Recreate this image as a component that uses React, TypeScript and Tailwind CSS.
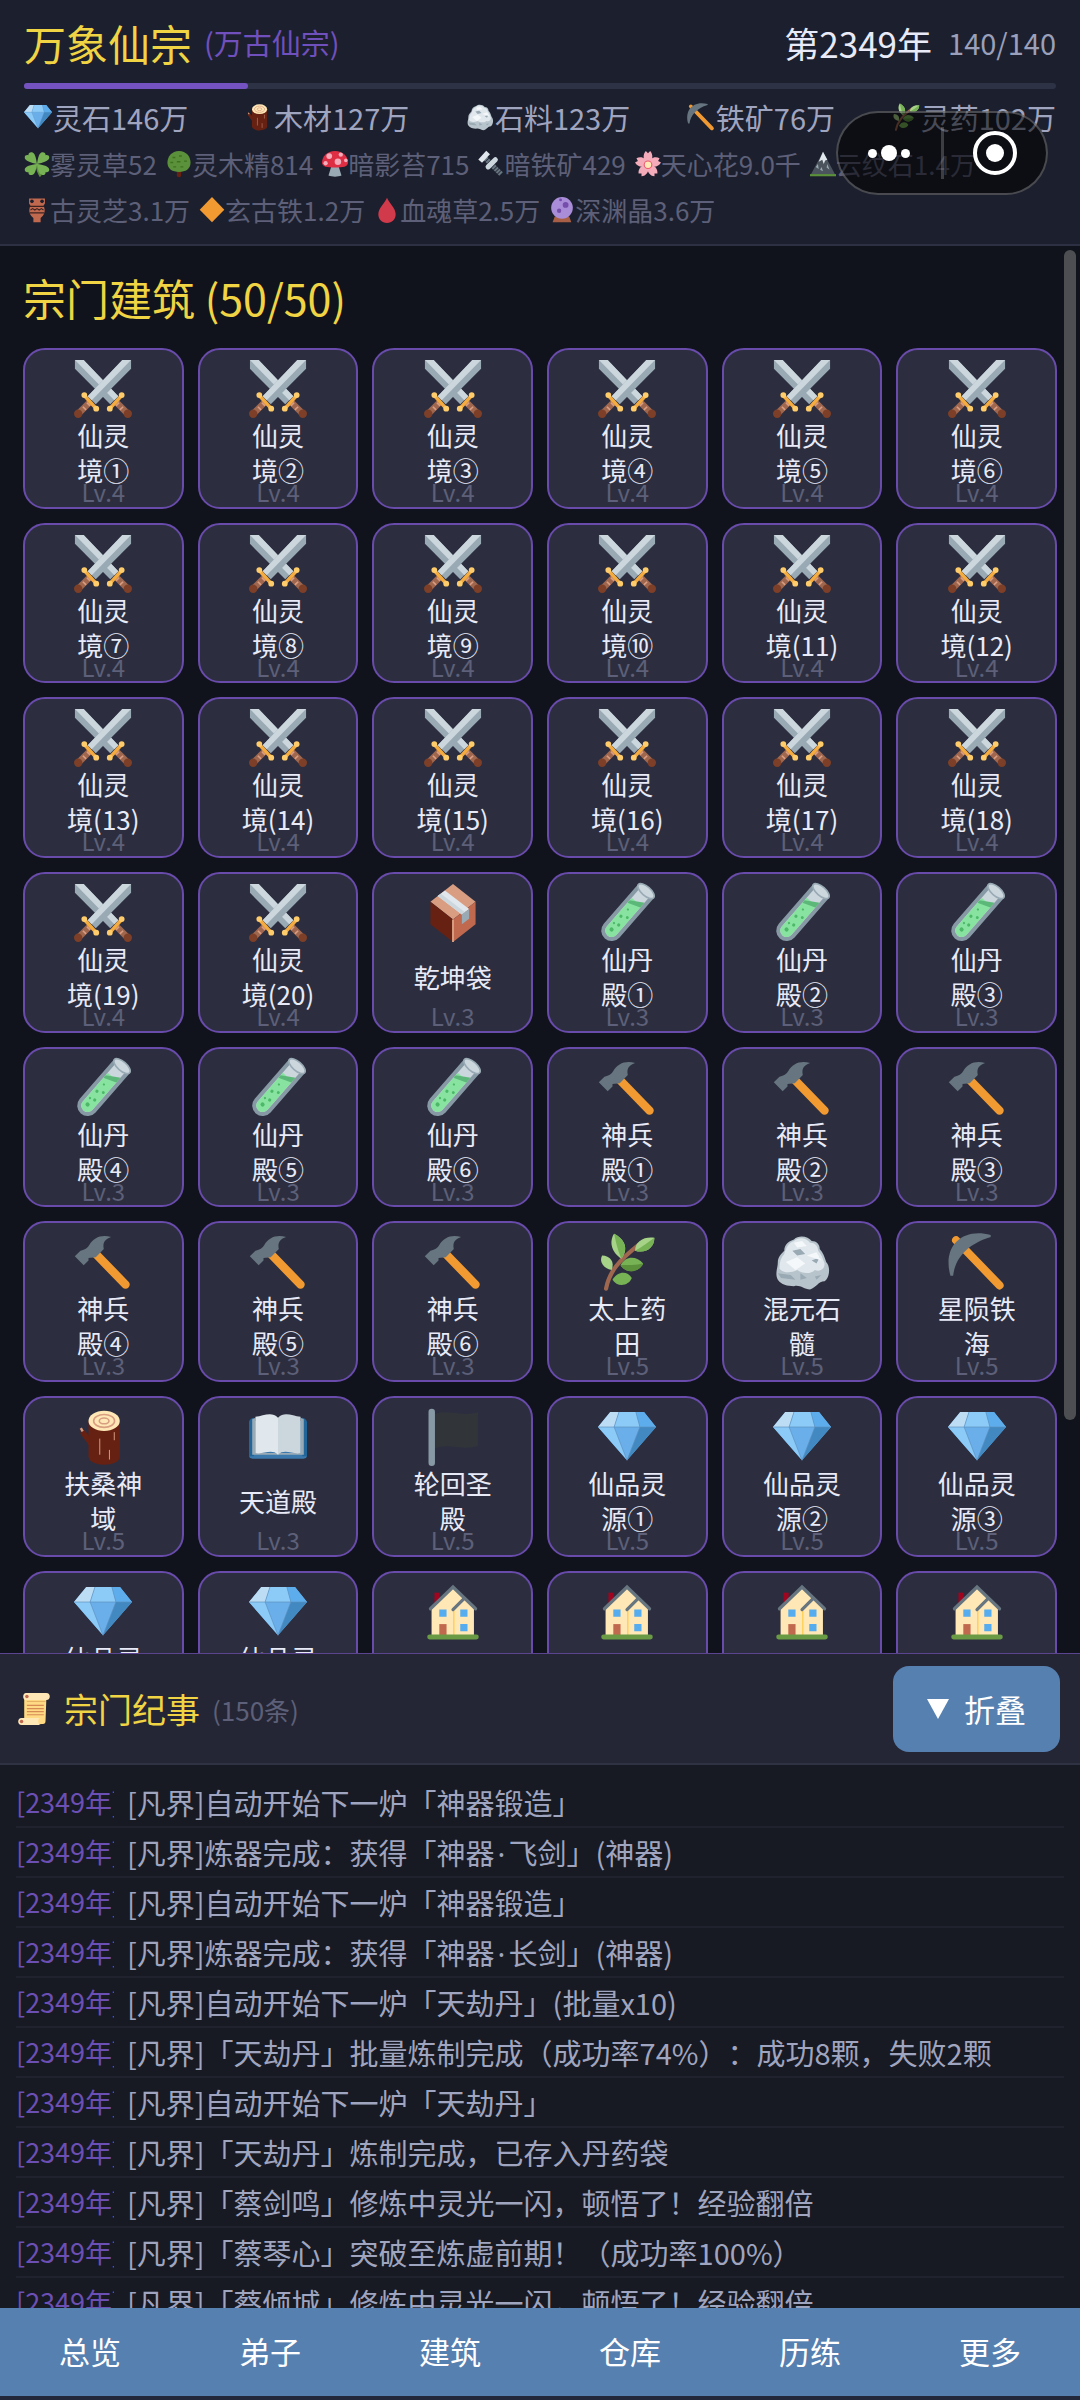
import type { ReactNode } from "react";

type IconName =
  | "swords" | "box" | "tube" | "hammer" | "herb" | "rock" | "pickaxe" | "log" | "book" | "flag" | "gem" | "house"
  | "clover" | "tree" | "mushroom" | "bolt" | "blossom" | "mountain" | "amphora" | "diamond" | "drop" | "orb" | "scroll";

const sword = (
  <>
    <path d="M30 0h5.400v5.500L13.500 27.500l-5-5z" fill="#99aab5" />
    <path d="M30 0h5.400L11 25l-2.500-2.500z" fill="#ccd6dd" />
    <path d="M10.500 25.500L3.500 32.500" stroke="#a0674f" strokeWidth="4" />
    <path d="M8 26.500l2 2M5.500 29l2 2" stroke="#d99e82" strokeWidth="1" />
    <circle cx="2.600" cy="33.400" r="2.600" fill="#7d3f27" />
    <path d="M6.400 22l7.400 8.200" stroke="#f4ab3f" strokeWidth="2.200" />
    <circle cx="6.400" cy="21.800" r="1.800" fill="#ffcc6b" />
    <circle cx="13.800" cy="30.200" r="1.800" fill="#ffcc6b" />
  </>
);

const ICONS: Record<IconName, ReactNode> = {
  swords: (
    <>
      <g transform="translate(36 0) scale(-1 1)">{sword}</g>
      {sword}
    </>
  ),
  box: (
    <>
      <path d="M18 0L32 11 18 22 4 11z" fill="#d99e82" />
      <path d="M4 11l14 11v14L4 25z" fill="#662113" />
      <path d="M32 11L18 22v14l14-11z" fill="#c1694f" />
      <path d="M18 22v14" stroke="#d99e82" strokeWidth="1.200" />
      <path d="M8.500 7.500L13 4l15 11.500-4.500 3.500z" fill="#e1e8ed" />
      <path d="M8.500 7.500l2-1.500 15 11.500-2 1.500z" fill="#ccd6dd" />
      <path d="M23.500 19l4.500-3.500v6L23.500 25z" fill="#99aab5" />
    </>
  ),
  tube: (
    <g transform="rotate(41 18 18)">
      <path d="M11.500 0h13v32.500a6.500 6.500 0 0 1-13 0z" fill="#8899a6" />
      <path d="M14 2h8v30.500a4 4 0 0 1-8 0z" fill="#ccd6dd" />
      <path d="M14 9h8v23.500a4 4 0 0 1-8 0z" fill="#88e3a0" />
      <path d="M14 11l8-5v4l-8 3z" fill="#5cb878" />
      <ellipse cx="18" cy="0" rx="6.300" ry="2.800" fill="#ccd6dd" stroke="#99aab5" />
      <g fill="#4cb868">
        <circle cx="17.500" cy="32" r="1.300" />
        <circle cx="19" cy="27" r="1" />
        <circle cx="16" cy="28" r=".7" />
        <circle cx="16.500" cy="22" r="1" />
        <circle cx="20" cy="20" r=".9" />
        <circle cx="17" cy="16" r=".7" />
      </g>
    </g>
  ),
  hammer: (
    <>
      <path d="M13.500 13L32 32" stroke="#f19a32" strokeWidth="5.200" strokeLinecap="round" />
      <path d="M23 2.500C17 .8 12 3 9.500 7.500 8 9.500 7 10.500 4 11l-3.500 3.500L6 20l3-3v-1.500l4.500-.5 5-5c-.8-4 .5-6 4.500-7.500z" fill="#66757f" />
    </>
  ),
  pickaxe: (
    <>
      <path d="M5 4.500L32 32.500" stroke="#f19a32" strokeWidth="5" strokeLinecap="round" />
      <path d="M26.500 1.200C8-3.500-3.500 9 1.500 26.500h1.700C4.500 15 13 6.500 26.500 2.500z" fill="#66757f" />
    </>
  ),
  herb: (
    <>
      <path d="M5 34.500C7 24 13 17 25 7.500" stroke="#a0674f" strokeWidth="2.600" fill="none" strokeLinecap="round" />
      <path d="M14.500 16C7 11 7.500 4 10 .500c6 3 9.500 9 4.500 15.500z" fill="#a6d388" />
      <path d="M14.500 16C12 10 11 5 10 .500c6 3 9.500 9 4.500 15.500z" fill="#77b255" />
      <path d="M23 11c0-6 6-9 12-8 0 6-5 10-12 8z" fill="#a6d388" />
      <path d="M23 11c4-2 8-5 12-8 0 6-5 10-12 8z" fill="#77b255" />
      <path d="M8.500 23c-5-1-8-5-6-9 5 0 8 4 6 9z" fill="#a6d388" />
      <path d="M14 20c3-6 10-6 14-1-2 5-10 7-14 1z" fill="#77b255" />
      <path d="M14 20c4 0 10 0 14-1-2 5-10 7-14 1z" fill="#5c913b" />
      <path d="M9 29c3-5 9-6 12-1-2 5-9 6-12 1z" fill="#77b255" />
    </>
  ),
  rock: (
    <>
      <path d="M13 4c3-3 9-2 11 1 3 0 5 2 5 5 2 2 3 5 4 8 3 3 2 10-1 12-4 0-5 4-9 5-4 0-6-3-10-2-4 0-8-1-10-4-2-4 0-7 0-11 0-3 2-5 4-7 0-4 3-6 6-7z" fill="#b8c4cc" />
      <path d="M13 5c3-3 8-2 10 1 3 0 5 2 5 5 2 2 3 5 4 8 0 4-3 5-6 4-3 3-8 2-11 0-4 2-9 2-11-1 0-4 1-7 3-9 1-4 3-7 6-8z" fill="#e1e8ed" />
      <path d="M12 11l5-1 3 3-5 1zM24 17l5-2-2 4zM3 25l8 1 3 3-9-1zM17 25l4 3-4 1zM26 27l4-1-3 3z" fill="#99aab5" />
      <path d="M13 6l5-1 3 3-6 1zM8 18l7-3 5 4-6 4zM21 14l6-2 3 5z" fill="#f5f8fa" />
    </>
  ),
  gem: (
    <>
      <path d="M7.600 2.500h21L36 11.800 18 32.500 0 11.800z" fill="#6aaeea" />
      <path d="M7.600 2.500H13L10 11.800H0z" fill="#bdddf4" />
      <path d="M13 2.500h10.500l2.500 9.300H10z" fill="#8ccaf7" />
      <path d="M23.500 2.500h5L36 11.800H26z" fill="#5dadec" />
      <path d="M0 11.800h10l8 20.700z" fill="#8ccaf7" />
      <path d="M36 11.800H26l-8 20.700z" fill="#4289c1" />
      <path d="M0 11.800h36M13 2.500l-3 9.300 8 20.700 8-20.700-2.500-9.300" stroke="#5b8fbd" strokeWidth=".4" fill="none" />
    </>
  ),
  log: (
    <>
      <path d="M9 8v22c0 7 19.500 7 19.500 0V8z" fill="#662113" />
      <path d="M10 24L4 16l.5-4 5 5z" fill="#662113" />
      <path d="M4.200 12.500l1.200 2" stroke="#d99e82" strokeWidth="1.500" />
      <ellipse cx="18.700" cy="8" rx="9.700" ry="6.300" fill="#ffe8b6" />
      <ellipse cx="18.700" cy="8" rx="6.500" ry="4" fill="none" stroke="#d99e82" />
      <ellipse cx="18.700" cy="8" rx="3" ry="1.800" fill="none" stroke="#d99e82" />
      <path d="M16 19v10M22 26v6M25 15v5" stroke="#d99e82" strokeWidth=".6" />
    </>
  ),
  book: (
    <>
      <path d="M1 8h34l1 21c0 2-1 2.500-3 2.500H3C1 31.500 0 31 0 29z" fill="#3b78ab" />
      <path d="M0 9c0-2 2-3 3-3v24H0zM36 9c0-2-2-3-3-3v24h3z" fill="#226699" />
      <path d="M2 7l2-1v22h28V6l2 1v22H2z" fill="#99aab5" />
      <path d="M4 5.500C9 5 14 2 18 6v23c-4-4-9 0-14-1z" fill="#e1e8ed" />
      <path d="M32 5.500C27 5 22 2 18 6v23c4-4 9 0 14-1z" fill="#ccd6dd" />
    </>
  ),
  flag: (
    <>
      <path d="M6 4c9-4 17 2 27.500-1.500v21C24 27 15 21 6 25.500z" fill="#31353a" />
      <path d="M4.800 2.500v31.500" stroke="#8899a6" strokeWidth="4" strokeLinecap="round" />
    </>
  ),
  house: (
    <>
      <path d="M6.500 6h3.200v7H6.500z" fill="#a0041e" />
      <path d="M18 3l13 13v17H4.700V16z" fill="#ffe8b6" />
      <path d="M18.500 17v15.500" stroke="#ffcc4d" strokeWidth=".8" />
      <path d="M4 16L18 2.500 32 16M25 9.500l-7 7" stroke="#66757f" strokeWidth="2" fill="none" strokeLinecap="round" />
      <path d="M9.500 16.500h4.500v4.500H9.500zM22.500 16.500H27v4.500h-4.500zM22.500 25.500H27V30h-4.500z" fill="#55acee" />
      <path d="M9.500 25.500H14V33H9.500z" fill="#c1694f" />
      <rect x="2" y="32" width="32" height="3" rx="1.500" fill="#6b9a45" />
    </>
  ),
  clover: (
    <>
      <path d="M18 18c0 7 1 11 5 17" stroke="#5c913b" strokeWidth="3" fill="none" />
      <path d="M18 18C10 16 1 14 1 9c0-3 3-4 5-3 0-4 3-5 6-4 4 2 5 10 6 16z" fill="#77b255" />
      <path d="M18 18C26 16 35 14 35 9c0-3-3-4-5-3 0-4-3-5-6-4-4 2-5 10-6 16z" fill="#77b255" />
      <path d="M18 18C10 19 1 21 1 26c0 3 3 4 5 3 0 4 3 5 6 4 4-2 5-9 6-15z" fill="#77b255" />
      <path d="M18 18c8 1 17 3 17 8 0 3-3 4-5 3 0 4-3 5-6 4-4-2-5-9-6-15z" fill="#77b255" />
    </>
  ),
  tree: (
    <>
      <path d="M15 24h6v10c0 3-6 3-6 0z" fill="#662113" />
      <path d="M18 0c10 0 16 8 16 16 0 9-7 13-16 13S2 25 2 16C2 8 8 0 18 0z" fill="#5c913b" />
      <path d="M9 9h4M18 7h4M6 16h4M15 15h5M25 14h4M10 22h4M20 22h4" stroke="#3e721d" strokeWidth="2" />
    </>
  ),
  mushroom: (
    <>
      <path d="M13 21h10l4 13c-5 2-13 2-18 0z" fill="#99aab5" />
      <path d="M18 0c11 0 18 8 18 16 0 6-7 7-18 7S0 22 0 16C0 8 7 0 18 0z" fill="#dd2e44" />
      <g fill="#f4abba">
        <circle cx="10" cy="7" r="4" />
        <circle cx="22" cy="15" r="4.500" />
        <circle cx="26" cy="5" r="3" />
        <circle cx="5" cy="17" r="3" />
        <circle cx="33" cy="13" r="2.500" />
      </g>
    </>
  ),
  bolt: (
    <>
      <path d="M10 10l22 22" stroke="#66757f" strokeWidth="7" strokeDasharray="3 1" />
      <path d="M3 14L14 2" stroke="#e1e8ed" strokeWidth="7" />
      <path d="M14 22l10-10" stroke="#ccd6dd" strokeWidth="7" strokeLinecap="round" />
    </>
  ),
  blossom: (
    <>
      <g fill="#f4abba">
        <path d="M18 19C10 13 11 4 15 0l3 3 3-3c4 4 5 13-3 19z" />
        <path d="M18 19c2-10 10-12 16-9l-2 4 4 2c-3 6-11 8-18 3z" />
        <path d="M18 19c9-1 14 6 13 12h-4v4c-6 0-12-7-9-16z" />
        <path d="M18 19c3 9-3 16-9 16v-4H5c-1-6 4-13 13-12z" />
        <path d="M18 19C11 24 3 22 0 16l4-2-2-4c6-3 14-1 16 9z" />
      </g>
      <circle cx="18" cy="19" r="6" fill="#ea596e" />
      <circle cx="18" cy="19" r="4.500" fill="#ffe8b6" />
    </>
  ),
  mountain: (
    <>
      <path d="M18 1l17 32H1z" fill="#4b545d" />
      <path d="M18 1l6 11-3 1-2 5-2-6-5 3z" fill="#e1e8ed" />
      <path d="M8 22l3-4 1 7zM24 18l3 8-4-3zM16 22l2 6-4-2z" fill="#99aab5" />
      <rect y="32" width="36" height="3" fill="#5c913b" />
    </>
  ),
  amphora: (
    <>
      <path d="M7 2h22v7l-2 3c4 8 0 14-4 17v6H13v-6c-4-3-8-9-4-17L7 9z" fill="#c1694f" />
      <path d="M8 13h20M8 22h20" stroke="#3b2320" strokeWidth="2" />
      <path d="M9 18l3-2 3 2 3-2 3 2 3-2 3 2" stroke="#3b2320" strokeWidth="1.500" fill="none" />
      <circle cx="11" cy="6" r="2.500" fill="#1c1f2e" />
      <circle cx="25" cy="6" r="2.500" fill="#1c1f2e" />
    </>
  ),
  diamond: <path d="M18 0l17 17.500L18 35 1 17.500z" fill="#f19a32" />,
  drop: <path d="M18 1c3 8 12 14 12 23 0 7-5 12-12 12S6 31 6 24C6 15 15 9 18 1z" fill="#d03a4a" />,
  orb: (
    <>
      <path d="M8 27h20l3 8H5z" fill="#a85f45" />
      <circle cx="18" cy="15" r="15" fill="#aa8dd8" />
      <circle cx="23" cy="11" r="4" fill="#744eaa" />
      <circle cx="14" cy="19" r="3" fill="#744eaa" />
      <circle cx="16" cy="4" r="2" fill="#744eaa" />
    </>
  ),
  scroll: (
    <>
      <path d="M7 3h25l-1 28c0 3-1 4-3 4H7z" fill="#ffd983" />
      <path d="M9 0c-4 0-4 7-1 8h24c5 0 5-8 0-8z" fill="#ffe8b6" />
      <circle cx="10" cy="4" r="2" fill="#c1694f" />
      <path d="M4 28h21c-3 0-3 8 1 8H4c-5 0-5-8 0-8z" fill="#ffe8b6" />
      <circle cx="4" cy="32" r="2" fill="#c1694f" />
      <path d="M10 9.500h21" stroke="#e0a95f" strokeWidth="1" />
      <path d="M10 14h19M10 17.500h19M10 21h19M10 24.500h19" stroke="#d88a55" strokeWidth="1.300" />
    </>
  ),
};

function Icon({ name, className }: { name: IconName; className: string }) {
  return (
    <svg viewBox="0 0 36 36" className={`${className} shrink-0 overflow-visible`} fill="none" aria-hidden="true">
      {ICONS[name]}
    </svg>
  );
}

const RESOURCES: { icon: IconName; text: string }[] = [
  { icon: "gem", text: "灵石146万" },
  { icon: "log", text: "木材127万" },
  { icon: "rock", text: "石料123万" },
  { icon: "pickaxe", text: "铁矿76万" },
  { icon: "herb", text: "灵药102万" },
];

const MATERIALS: { icon: IconName; text: string }[] = [
  { icon: "clover", text: "雾灵草52" },
  { icon: "tree", text: "灵木精814" },
  { icon: "mushroom", text: "暗影苔715" },
  { icon: "bolt", text: "暗铁矿429" },
  { icon: "blossom", text: "天心花9.0千" },
  { icon: "mountain", text: "云纹石1.4万" },
  { icon: "amphora", text: "古灵芝3.1万" },
  { icon: "diamond", text: "玄古铁1.2万" },
  { icon: "drop", text: "血魂草2.5万" },
  { icon: "orb", text: "深渊晶3.6万" },
];

interface Building {
  icon: IconName;
  lines: string[];
  level?: number;
}

const CIRCLED = ["①", "②", "③", "④", "⑤", "⑥", "⑦", "⑧", "⑨", "⑩"];
const ordinal = (i: number) => CIRCLED[i] ?? `(${i + 1})`;

function series(count: number, icon: IconName, first: string, second: string, level: number): Building[] {
  return Array.from({ length: count }, (_, i) => ({ icon, lines: [first, second + ordinal(i)], level }));
}

const BUILDINGS: Building[] = [
  ...series(20, "swords", "仙灵", "境", 4),
  { icon: "box", lines: ["乾坤袋"], level: 3 },
  ...series(6, "tube", "仙丹", "殿", 3),
  ...series(6, "hammer", "神兵", "殿", 3),
  { icon: "herb", lines: ["太上药", "田"], level: 5 },
  { icon: "rock", lines: ["混元石", "髓"], level: 5 },
  { icon: "pickaxe", lines: ["星陨铁", "海"], level: 5 },
  { icon: "log", lines: ["扶桑神", "域"], level: 5 },
  { icon: "book", lines: ["天道殿"], level: 3 },
  { icon: "flag", lines: ["轮回圣", "殿"], level: 5 },
  ...series(5, "gem", "仙品灵", "源", 5),
  { icon: "house", lines: [] },
  { icon: "house", lines: [] },
  { icon: "house", lines: [] },
  { icon: "house", lines: [] },
];

const LOGS = [
  "[凡界]自动开始下一炉「神器锻造」",
  "[凡界]炼器完成：获得「神器·飞剑」(神器)",
  "[凡界]自动开始下一炉「神器锻造」",
  "[凡界]炼器完成：获得「神器·长剑」(神器)",
  "[凡界]自动开始下一炉「天劫丹」(批量x10)",
  "[凡界]「天劫丹」批量炼制完成（成功率74%）：成功8颗，失败2颗",
  "[凡界]自动开始下一炉「天劫丹」",
  "[凡界]「天劫丹」炼制完成，已存入丹药袋",
  "[凡界]「蔡剑鸣」修炼中灵光一闪，顿悟了！经验翻倍",
  "[凡界]「蔡琴心」突破至炼虚前期！（成功率100%）",
  "[凡界]「蔡倾城」修炼中灵光一闪，顿悟了！经验翻倍",
];

const TABS = ["总览", "弟子", "建筑", "仓库", "历练", "更多"];

function BuildingCard({ icon, lines, level }: Building) {
  return (
    <button
      type="button"
      className="flex aspect-square flex-col items-center rounded-[22px] border-2 border-[#694bab] bg-[#2c2e3f] pt-[10px]"
    >
      <Icon name={icon} className="size-[58px]" />
      <span className="flex h-[68px] shrink-0 flex-col justify-center text-[26px] leading-[35px] text-[#e8eaf8]">
        {lines.map((line) => (
          <span key={line}>{line}</span>
        ))}
      </span>
      {level && <span className="-mt-[6px] text-[24px] leading-[24px] text-[#5d6078]">Lv.{level}</span>}
    </button>
  );
}

// the CJK face draws the middle dot full width, so it takes a Latin face
function LogText({ text }: { text: string }) {
  const [before, after] = text.split("·");
  return (
    <span className="ml-[13px] text-[29px] text-[#a0a5bf]">
      {before}
      {after && <span className="px-[3px] font-['Noto_Sans',sans-serif] leading-none">·</span>}
      {after}
    </span>
  );
}

function CapsuleMenu() {
  return (
    <div className="absolute top-[111px] right-8 flex h-[84px] w-[212px] items-center rounded-full border-2 border-white/25 bg-black/55">
      <button type="button" aria-label="更多" className="flex h-full flex-1 items-center justify-center gap-1">
        <span className="size-[9px] rounded-full bg-white" />
        <span className="size-4 rounded-full bg-white" />
        <span className="size-[9px] rounded-full bg-white" />
      </button>
      <span className="h-[52px] w-[3px] bg-white/20" />
      <button type="button" aria-label="关闭" className="flex h-full flex-1 items-center justify-center">
        <span className="flex size-11 items-center justify-center rounded-full border-4 border-white">
          <span className="size-[18px] rounded-full bg-white" />
        </span>
      </button>
    </div>
  );
}

export default function App() {
  return (
    <div className="relative flex h-screen flex-col overflow-hidden bg-[#10131b] font-['Noto_Sans_CJK_SC',sans-serif] [text-spacing-trim:space-all]">
      {/* Header */}
      <header className="border-b-2 border-[#2d3042] bg-[#1c1f2e] px-6 pt-[14px] pb-[11px]">
        <div className="flex h-[58px] items-center justify-between">
          <div className="flex items-center gap-3">
            <h1 className="text-[42px] leading-[58px] text-[#f0d443]">万象仙宗</h1>
            <span className="text-[29px] text-[#7050bd]">(万古仙宗)</span>
          </div>
          <div className="flex items-center gap-4">
            <span className="text-[35px] text-[#e8eaf8]">第2349年</span>
            <span className="text-[29px] text-[#9a9fba]">140/140</span>
          </div>
        </div>
        <div className="mt-[11px] h-[6px] rounded-full bg-[#2e3245]">
          <div className="h-full rounded-full bg-[#7452c0]" style={{ width: "21.7%" }} />
        </div>
        <div className="mt-[6px] flex justify-between">
          {RESOURCES.map((item) => (
            <span key={item.text} className="flex items-center gap-px text-[29px] leading-[44px] text-[#a0a5bf]">
              <Icon name={item.icon} className="size-7" />
              {item.text}
            </span>
          ))}
        </div>
        <div className="mt-[2px] flex flex-wrap gap-x-[9px]">
          {MATERIALS.map((item) => (
            <span key={item.text} className="flex items-center text-[26px] leading-[46px] text-[#5d6078]">
              <Icon name={item.icon} className="size-[26px]" />
              {item.text}
            </span>
          ))}
        </div>
      </header>

      <CapsuleMenu />

      {/* Buildings */}
      <main className="relative min-h-0 flex-1">
        <div className="h-full overflow-y-auto px-[23px] pt-[21px] [scrollbar-width:none]">
          <h2 className="text-[43px] leading-[60px] text-[#f0d443]">宗门建筑 (50/50)</h2>
          <div className="mt-[21px] grid grid-cols-6 gap-[14px]">
            {BUILDINGS.map((b, i) => (
              <BuildingCard key={i} {...b} />
            ))}
          </div>
        </div>
        <div className="absolute top-1 right-1 h-[1170px] w-3 rounded-full bg-[#4d4e52]" />
      </main>

      {/* Event log */}
      <section className="flex h-[655px] flex-col border-t border-[#5b4590] bg-[#171923]">
        <div className="flex items-center justify-between border-b-2 border-[#2f3242] bg-[#252635] pt-3 pr-5 pb-[11px] pl-[18px]">
          <div className="flex items-center">
            <Icon name="scroll" className="size-8" />
            <h2 className="ml-[14px] text-[34px] leading-[50px] text-[#f0d443]">宗门纪事</h2>
            <span className="ml-3 text-[26px] text-[#5d6078]">(150条)</span>
          </div>
          <button
            type="button"
            className="flex h-[86px] w-[167px] items-center justify-center gap-[15px] rounded-[16px] bg-[#5680b0] text-[31px] text-white"
          >
            <svg viewBox="0 0 22 20" className="h-5 w-[22px]" aria-hidden="true">
              <path d="M0 0h22L11 20z" fill="currentColor" />
            </svg>
            折叠
          </button>
        </div>
        <ul className="min-h-0 flex-1 overflow-hidden px-4 pt-[13px]">
          {LOGS.map((log, i) => (
            <li key={i} className="flex items-center border-b-2 border-[#20222d] leading-[48px] whitespace-nowrap">
              <span className="w-[98px] shrink-0 overflow-hidden text-[27px] text-[#6c4fb4]">[2349年]</span>
              <LogText text={log} />
            </li>
          ))}
        </ul>
      </section>

      {/* Bottom tabs */}
      <nav className="grid grid-cols-6 border-b-4 border-[#23283a] bg-[#5680b0]">
        {TABS.map((tab) => (
          <button key={tab} type="button" className="h-[88px] pb-[2px] text-[31px] text-white">
            {tab}
          </button>
        ))}
      </nav>
    </div>
  );
}
